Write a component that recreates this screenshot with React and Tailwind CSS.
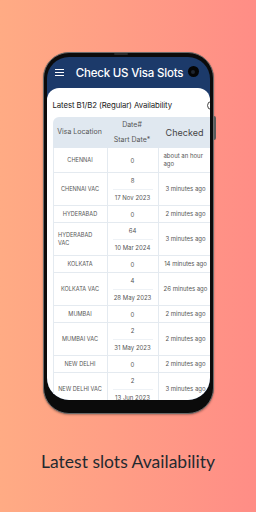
export default function App() {
  const rows = [
    { loc: 'CHENNAI', n: '0', checked: 'about an hour ago', h: 'h-[25px]' },
    { loc: 'CHENNAI VAC', n: '8', date: '17 Nov 2023', checked: '3 minutes ago' },
    { loc: 'HYDERABAD', n: '0', checked: '2 minutes ago' },
    { loc: 'HYDERABAD VAC', n: '64', date: '10 Mar 2024', checked: '3 minutes ago' },
    { loc: 'KOLKATA', n: '0', checked: '14 minutes ago' },
    { loc: 'KOLKATA VAC', n: '4', date: '28 May 2023', checked: '26 minutes ago' },
    { loc: 'MUMBAI', n: '0', checked: '2 minutes ago' },
    { loc: 'MUMBAI VAC', n: '2', date: '31 May 2023', checked: '2 minutes ago' },
    { loc: 'NEW DELHI', n: '0', checked: '2 minutes ago' },
    { loc: 'NEW DELHI VAC', n: '2', date: '13 Jun 2023', checked: '3 minutes ago' },
  ];
  return (
    <div className="w-[256px] h-[512px] bg-gradient-to-r from-[#ffab84] to-[#ff8d86] flex flex-col items-center overflow-hidden" style={{ fontFamily: 'Inter, "Noto Sans", sans-serif' }}>
      <div className="relative mt-[52px] w-[171px] h-[362px] rounded-[26px] bg-[#0b0b0b] border border-[#6a6a6a] pt-[4px] px-[3px] pb-[13px] shadow-[0_1px_2px_rgba(0,0,0,0.3)]">
        <div className="absolute left-[70px] top-[0px] w-[14px] h-[2px] rounded-full bg-[#2a2a2a]" />
        <div className="absolute right-[-3px] top-[63px] w-[2px] h-[24px] rounded-r bg-[#5a5a5a]" />
        <div className="relative h-full rounded-[22px] overflow-hidden bg-[#1c3a6a] flex flex-col">
          <div className="h-[31px] shrink-0 flex items-center px-[8px]">
            <div className="flex flex-col gap-[1.5px] w-[9px]">
              <div className="h-[1.5px] bg-white" />
              <div className="h-[1.5px] bg-white" />
              <div className="h-[1.5px] bg-white" />
            </div>
            <div className="flex-1 text-center text-white text-[11.5px] font-medium tracking-[-0.2px] pr-[6px] mt-[2px]">Check US Visa Slots</div>
          </div>
          <div className="absolute left-[141px] top-[9px] w-[11px] h-[11px] rounded-full bg-[#050505] flex items-center justify-center">
            <div className="w-[4px] h-[4px] rounded-full bg-[#1e2530]" />
          </div>
          <div className="flex-1 bg-white rounded-t-[12px] overflow-hidden pl-[6px]">
            <div className="flex items-center h-[29px] pt-[6px]">
              <div className="text-[7.8px] text-[#222] tracking-[-0.1px] whitespace-nowrap">Latest B1/B2 (Regular) Availability</div>
              <div className="ml-auto mr-[-6px] w-[9px] h-[9px] rounded-full border border-[#444] shrink-0" />
            </div>
            <div className="w-[159px]">
              <div className="grid grid-cols-[54px_51px_54px] h-[31px] bg-[#e0e8f0] rounded-tl-[6px] text-[#555]">
                <div className="flex items-center justify-center text-[7px]">Visa Location</div>
                <div className="flex flex-col items-center justify-between text-[7px] py-[3px]">
                  <div>Date#</div>
                  <div>Start Date*</div>
                </div>
                <div className="flex items-center justify-center text-[9px] text-[#444]">Checked</div>
              </div>
              {rows.map((r, i) => (
                <div key={i} className={`grid grid-cols-[54px_51px_54px] border-b border-l border-[#e4eaf0] text-[#555] text-[6px] ${r.date ? 'h-[33px]' : r.h || 'h-[17px]'}`}>
                  <div className="flex items-center justify-center border-r border-[#e4eaf0] px-[4px]">
                    <div className="max-w-[44px] text-left leading-[8px] text-[5.6px]">{r.loc}</div>
                  </div>
                  <div className="flex flex-col border-r border-[#e4eaf0]">
                    {r.date ? (
                      <>
                        <div className="flex-1 flex items-center justify-center mx-[5px] border-b border-[#eef2f6]">{r.n}</div>
                        <div className="flex-1 flex items-center justify-center">{r.date}</div>
                      </>
                    ) : (
                      <div className="flex-1 flex items-center justify-center">{r.n}</div>
                    )}
                  </div>
                  <div className="flex items-center justify-center px-[2px]">
                    <div className="max-w-[44px] text-left leading-[8px] whitespace-normal">{r.checked}</div>
                  </div>
                </div>
              ))}
            </div>
          </div>
        </div>
      </div>
      <div className="mt-[35px] text-[17.5px] text-[#1f2a30]" style={{ fontFamily: 'Lato, sans-serif' }}>Latest slots Availability</div>
    </div>
  );
}
